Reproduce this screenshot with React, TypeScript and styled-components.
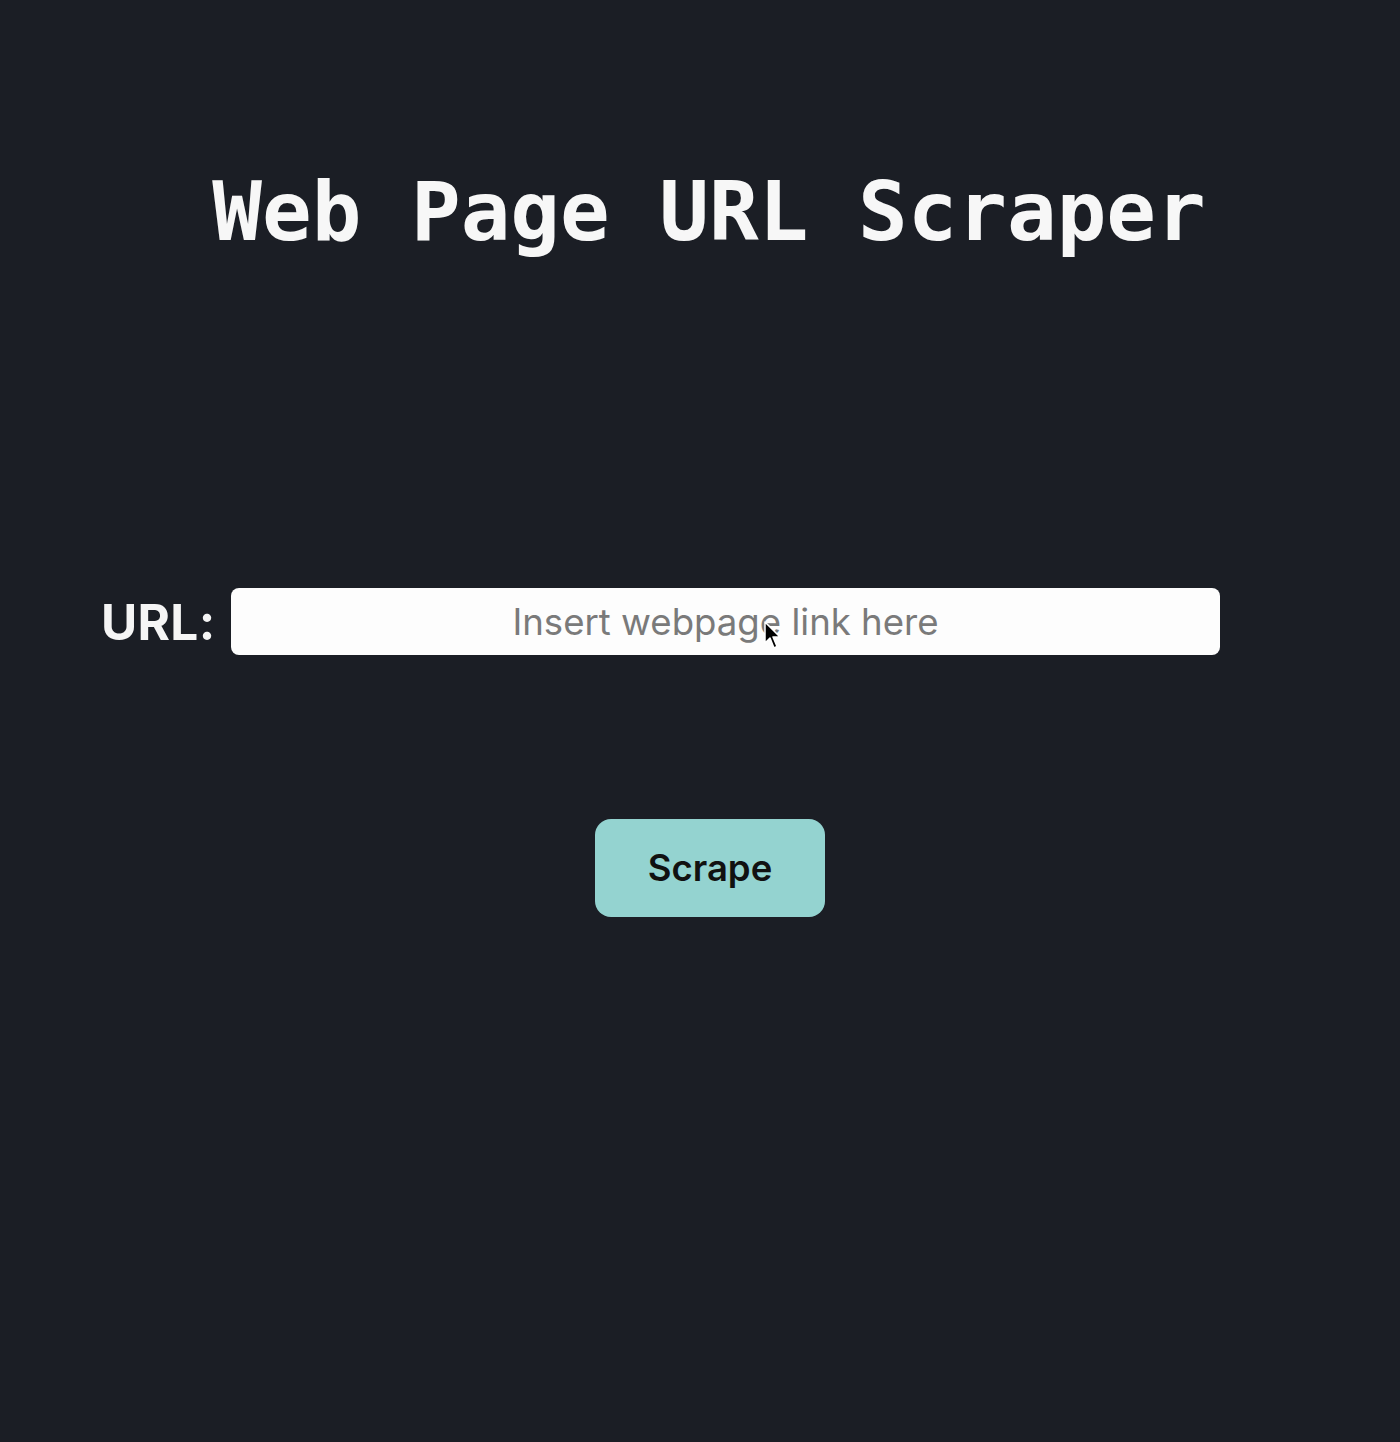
import React from "react";
import styled, { createGlobalStyle } from "styled-components";

const Global = createGlobalStyle`
  html, body {
    margin: 0;
    padding: 0;
    background: #1b1e25;
  }
  body {
    font-family: Inter, "Liberation Sans", sans-serif;
  }
`;

const Page = styled.main`
  position: relative;
  width: 1400px;
  height: 1442px;
  background: #1b1e25;
  display: flex;
  flex-direction: column;
  align-items: stretch;
  box-sizing: border-box;
  padding-top: 161px;
`;

const Title = styled.h1`
  margin: 0;
  padding-left: 18px;
  text-align: center;
  font-family: "DejaVu Sans Mono", "Liberation Mono", monospace;
  font-weight: bold;
  font-size: 82.5px;
  line-height: 100px;
  color: #f7f7f7;
`;

const Form = styled.form`
  display: flex;
  flex-direction: column;
  align-items: stretch;
  margin-top: 327px;
`;

const Row = styled.div`
  display: flex;
  align-items: center;
  gap: 17px;
  padding-left: 101px;
`;

const Label = styled.label`
  width: 113px;
  font-family: Inter, "Liberation Sans", sans-serif;
  font-weight: 700;
  font-size: 49.5px;
  color: #f5f5f5;
  letter-spacing: 0.3px;
  white-space: nowrap;
`;

const InputWrap = styled.div`
  position: relative;
`;

const Input = styled.input`
  box-sizing: border-box;
  width: 989px;
  height: 67px;
  border: none;
  border-radius: 8px;
  background: #fdfdfd;
  text-align: center;
  font-family: Inter, "Liberation Sans", sans-serif;
  font-size: 36.6px;
  color: #333;
  outline: none;
  &::placeholder {
    color: #7a7a7a;
  }
`;

const Pointer = styled.svg`
  position: absolute;
  left: 533px;
  top: 33px;
  width: 20px;
  height: 30px;
  pointer-events: none;
`;

const Button = styled.button`
  align-self: center;
  margin-top: 164px;
  margin-left: 20px;
  width: 230px;
  height: 98px;
  border: none;
  border-radius: 16px;
  background: #94d3d0;
  color: #111;
  font-family: Inter, "Liberation Sans", sans-serif;
  font-weight: 600;
  font-size: 36.5px;
  cursor: pointer;
`;

export default function App() {
  return (
    <>
      <Global />
      <Page>
        <Title>Web Page URL Scraper</Title>
        <Form onSubmit={(e) => e.preventDefault()}>
          <Row>
            <Label htmlFor="url">URL:</Label>
            <InputWrap>
              <Input id="url" type="text" placeholder="Insert webpage link here" />
              <Pointer viewBox="0 0 20 30">
                <path
                  d="M1 1 L1 22 L6 17 L10 27 L13 25.5 L9 16 L16 16 Z"
                  fill="#000"
                  stroke="#fff"
                  strokeWidth="1.5"
                  strokeLinejoin="round"
                />
              </Pointer>
            </InputWrap>
          </Row>
          <Button type="submit">Scrape</Button>
        </Form>
      </Page>
    </>
  );
}
